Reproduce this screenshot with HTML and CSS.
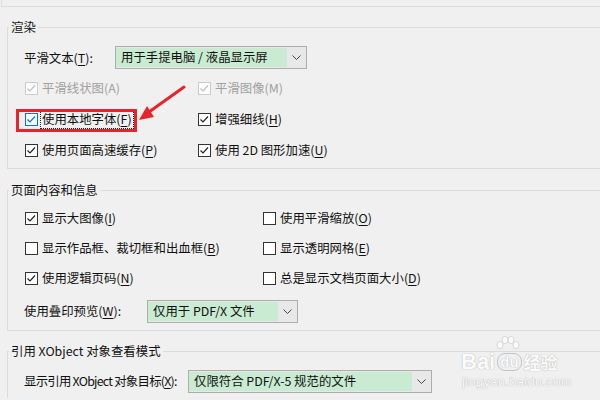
FILE: index.html
```html
<!DOCTYPE html>
<html lang="zh-CN">
<head>
    <meta charset="UTF-8">
    <title>显示性能</title>
    <link rel="stylesheet" href="styles.css">
</head>
<body>
    <div class="prev-group"></div>

    <fieldset class="group">
        <legend>渲染</legend>
        <div class="rows cols-render">
            <div class="field span-2">
                <span class="field-label label-smooth">平滑文本(<u>T</u>):</span>
                <div class="combo combo-smooth">
                    <span class="combo-value">用于手提电脑 / 液晶显示屏</span>
                    <span class="combo-arrow"><svg width="9" height="5" viewBox="0 0 9 5"><path d="M0.5 0.5 L4.5 4.5 L8.5 0.5" fill="none" stroke="#444" stroke-width="1"/></svg></span>
                </div>
            </div>

            <label class="check disabled"><span class="box checked"><svg viewBox="0 0 13 13"><path d="M2.5 6.5 L5 9 L10 3.5"/></svg></span>平滑线状图(A)</label>
            <label class="check disabled"><span class="box checked"><svg viewBox="0 0 13 13"><path d="M2.5 6.5 L5 9 L10 3.5"/></svg></span>平滑图像(M)</label>

            <label class="check focused"><span class="box checked"><svg viewBox="0 0 13 13"><path d="M2.5 6.5 L5 9 L10 3.5"/></svg></span><span class="focus-text">使用本地字体(<u>F</u>)</span></label>
            <label class="check"><span class="box checked"><svg viewBox="0 0 13 13"><path d="M2.5 6.5 L5 9 L10 3.5"/></svg></span>增强细线(<u>H</u>)</label>

            <label class="check"><span class="box checked"><svg viewBox="0 0 13 13"><path d="M2.5 6.5 L5 9 L10 3.5"/></svg></span>使用页面高速缓存(<u>P</u>)</label>
            <label class="check"><span class="box checked"><svg viewBox="0 0 13 13"><path d="M2.5 6.5 L5 9 L10 3.5"/></svg></span>使用 2D 图形加速(<u>U</u>)</label>
        </div>
    </fieldset>

    <fieldset class="group group-page">
        <legend>页面内容和信息</legend>
        <div class="rows cols-page">
            <label class="check"><span class="box checked"><svg viewBox="0 0 13 13"><path d="M2.5 6.5 L5 9 L10 3.5"/></svg></span>显示大图像(<u>I</u>)</label>
            <label class="check"><span class="box"></span>使用平滑缩放(<u>O</u>)</label>

            <label class="check"><span class="box"></span>显示作品框、裁切框和出血框(<u>B</u>)</label>
            <label class="check"><span class="box"></span>显示透明网格(<u>E</u>)</label>

            <label class="check"><span class="box checked"><svg viewBox="0 0 13 13"><path d="M2.5 6.5 L5 9 L10 3.5"/></svg></span>使用逻辑页码(<u>N</u>)</label>
            <label class="check"><span class="box"></span>总是显示文档页面大小(<u>D</u>)</label>

            <div class="field span-2 field-gap">
                <span class="field-label label-overprint">使用叠印预览(<u>W</u>):</span>
                <div class="combo combo-overprint">
                    <span class="combo-value">仅用于 PDF/X 文件</span>
                    <span class="combo-arrow"><svg width="9" height="5" viewBox="0 0 9 5"><path d="M0.5 0.5 L4.5 4.5 L8.5 0.5" fill="none" stroke="#444" stroke-width="1"/></svg></span>
                </div>
            </div>
        </div>
    </fieldset>

    <fieldset class="group group-xobject">
        <legend>引用 XObject 对象查看模式</legend>
        <div class="rows">
            <div class="field">
                <span class="field-label label-xobject">显示引用 XObject 对象目标(<u>X</u>):</span>
                <div class="combo combo-xobject">
                    <span class="combo-value">仅限符合 PDF/X-5 规范的文件</span>
                    <span class="combo-arrow"><svg width="9" height="5" viewBox="0 0 9 5"><path d="M0.5 0.5 L4.5 4.5 L8.5 0.5" fill="none" stroke="#444" stroke-width="1"/></svg></span>
                </div>
            </div>
        </div>
    </fieldset>

    <!-- annotation drawn over the dialog -->
    <div class="mark-box"></div>
    <svg class="mark-arrow" width="600" height="400" viewBox="0 0 600 400">
        <line x1="184" y1="87" x2="149" y2="112" stroke="#e8232b" stroke-width="3" stroke-linecap="round"/>
        <polygon points="139,120 154,117 147,106" fill="#e8232b"/>
    </svg>

    <div class="watermark">
        <svg class="paw" width="26" height="18" viewBox="0 0 26 18">
            <ellipse cx="6" cy="9" rx="3" ry="3.6"/>
            <ellipse cx="11" cy="4" rx="3" ry="3.6"/>
            <ellipse cx="17" cy="4" rx="3" ry="3.6"/>
            <ellipse cx="22" cy="9" rx="3" ry="3.6"/>
        </svg>
        <div class="wm-logo"><span>Bai</span><span class="wm-du">du</span><span class="wm-jy">经验</span></div>
        <div class="wm-url">jingyan.baidu.com</div>
    </div>
</body>
</html>
```

FILE: styles.css
```css
body {
    margin: 0;
    width: 600px;
    height: 400px;
    overflow: hidden;
    background-color: #f0f0f0;
    color: #111;
    font-family: "Noto Sans CJK SC", "Noto Sans", sans-serif;
    font-size: 12.4px;
    position: relative;
}

u {
    text-decoration-thickness: 1px;
    text-underline-offset: 2px;
}

.prev-group {
    height: 6px;
    margin-left: 1px;
    border-left: 1px solid #dcdcdc;
    border-bottom: 1px solid #dcdcdc;
}

.group {
    margin: 11px 0 0 7px;
    padding: 0 0 2px 0;
    border: 1px solid #dcdcdc;
    border-right: none;
    min-width: 0;
}

.group legend {
    padding: 0 2px;
    margin-left: 1px;
    line-height: 18px;
}

.group-page {
    margin-top: 12px;
    padding-bottom: 7px;
}

.group-xobject {
    margin-top: 11px;
    border-bottom: none;
}

.rows {
    display: grid;
    padding: 6px 0 0 16px;
    grid-auto-rows: 31px;
    align-items: center;
}

.cols-render {
    grid-template-columns: 173px 1fr;
}

.cols-page {
    padding-top: 4px;
    grid-template-columns: 238px 1fr;
    grid-auto-rows: 30px;
}

.group-xobject .rows {
    grid-auto-rows: 30px;
}

.span-2 {
    grid-column: 1 / 3;
}

.field-gap {
    margin-top: 6px;
}

.field {
    display: flex;
    align-items: center;
}

.field-label {
    flex: none;
    white-space: nowrap;
}

.label-smooth { width: 91px; }
.label-overprint { width: 123px; }
.label-xobject {
    width: 164px;
    letter-spacing: -0.75px;
}

.combo {
    display: flex;
    height: 21px;
    border: 1px solid #adadad;
    background-color: #e8e8e8;
}

.combo-smooth { width: 190px; }
.combo-overprint { width: 149px; }
.combo-xobject { width: 242px; }

.combo-value {
    flex: 1;
    padding-left: 5px;
    margin: 1px 0;
    line-height: 19px;
    background-color: #c9ebd1;
    white-space: nowrap;
}

.combo-arrow {
    width: 19px;
    display: flex;
    align-items: center;
    justify-content: center;
}

.check {
    display: flex;
    align-items: center;
    white-space: nowrap;
    line-height: 17px;
}

.box {
    flex: none;
    width: 11px;
    height: 11px;
    margin: 0 4px 0 1px;
    border: 1px solid #333;
    background-color: #fff;
}

.box svg {
    display: block;
    margin: -1px;
    width: 13px;
    height: 13px;
}

.box path {
    fill: none;
    stroke: #222;
    stroke-width: 1.2;
}

.disabled {
    color: #a0a0a0;
}

.disabled .box {
    border-color: #cccccc;
}

.disabled .box path {
    stroke: #bdbdbd;
}

.focused .box {
    border-color: #0078d7;
}

.focused .box path {
    stroke: #0078d7;
}

.focus-text {
    outline: 1px dotted #222;
    outline-offset: 0;
    padding: 0 1px;
    margin-left: -1px;
}

.mark-box {
    position: absolute;
    left: 16px;
    top: 109px;
    width: 115px;
    height: 17px;
    border: 3px solid #e8232b;
}

.mark-arrow {
    position: absolute;
    left: 0;
    top: 0;
}

.watermark {
    position: absolute;
    left: 461px;
    top: 336px;
    width: 110px;
    color: #fbfbfb;
    text-shadow: 0 0 1px #b8b8b8, 0 0 1px #b8b8b8;
    font-family: "Liberation Sans", Arial, sans-serif;
}

.paw {
    position: absolute;
    left: 33px;
    top: 0;
    fill: #fbfbfb;
    stroke: #c4c4c4;
    stroke-width: 0.6;
}

.wm-logo {
    margin-top: 14px;
    display: flex;
    align-items: center;
    font-size: 22px;
    font-weight: bold;
    line-height: 24px;
}

.wm-du {
    font-size: 15px;
    margin: 0 2px;
    padding: 0 2px;
    border: 1px solid #c4c4c4;
    border-radius: 8px;
    line-height: 16px;
}

.wm-jy {
    font-family: "Noto Sans CJK SC", sans-serif;
    font-size: 17px;
}

.wm-url {
    font-size: 13px;
    line-height: 16px;
    letter-spacing: 0.3px;
    margin-left: 1px;
}
```
